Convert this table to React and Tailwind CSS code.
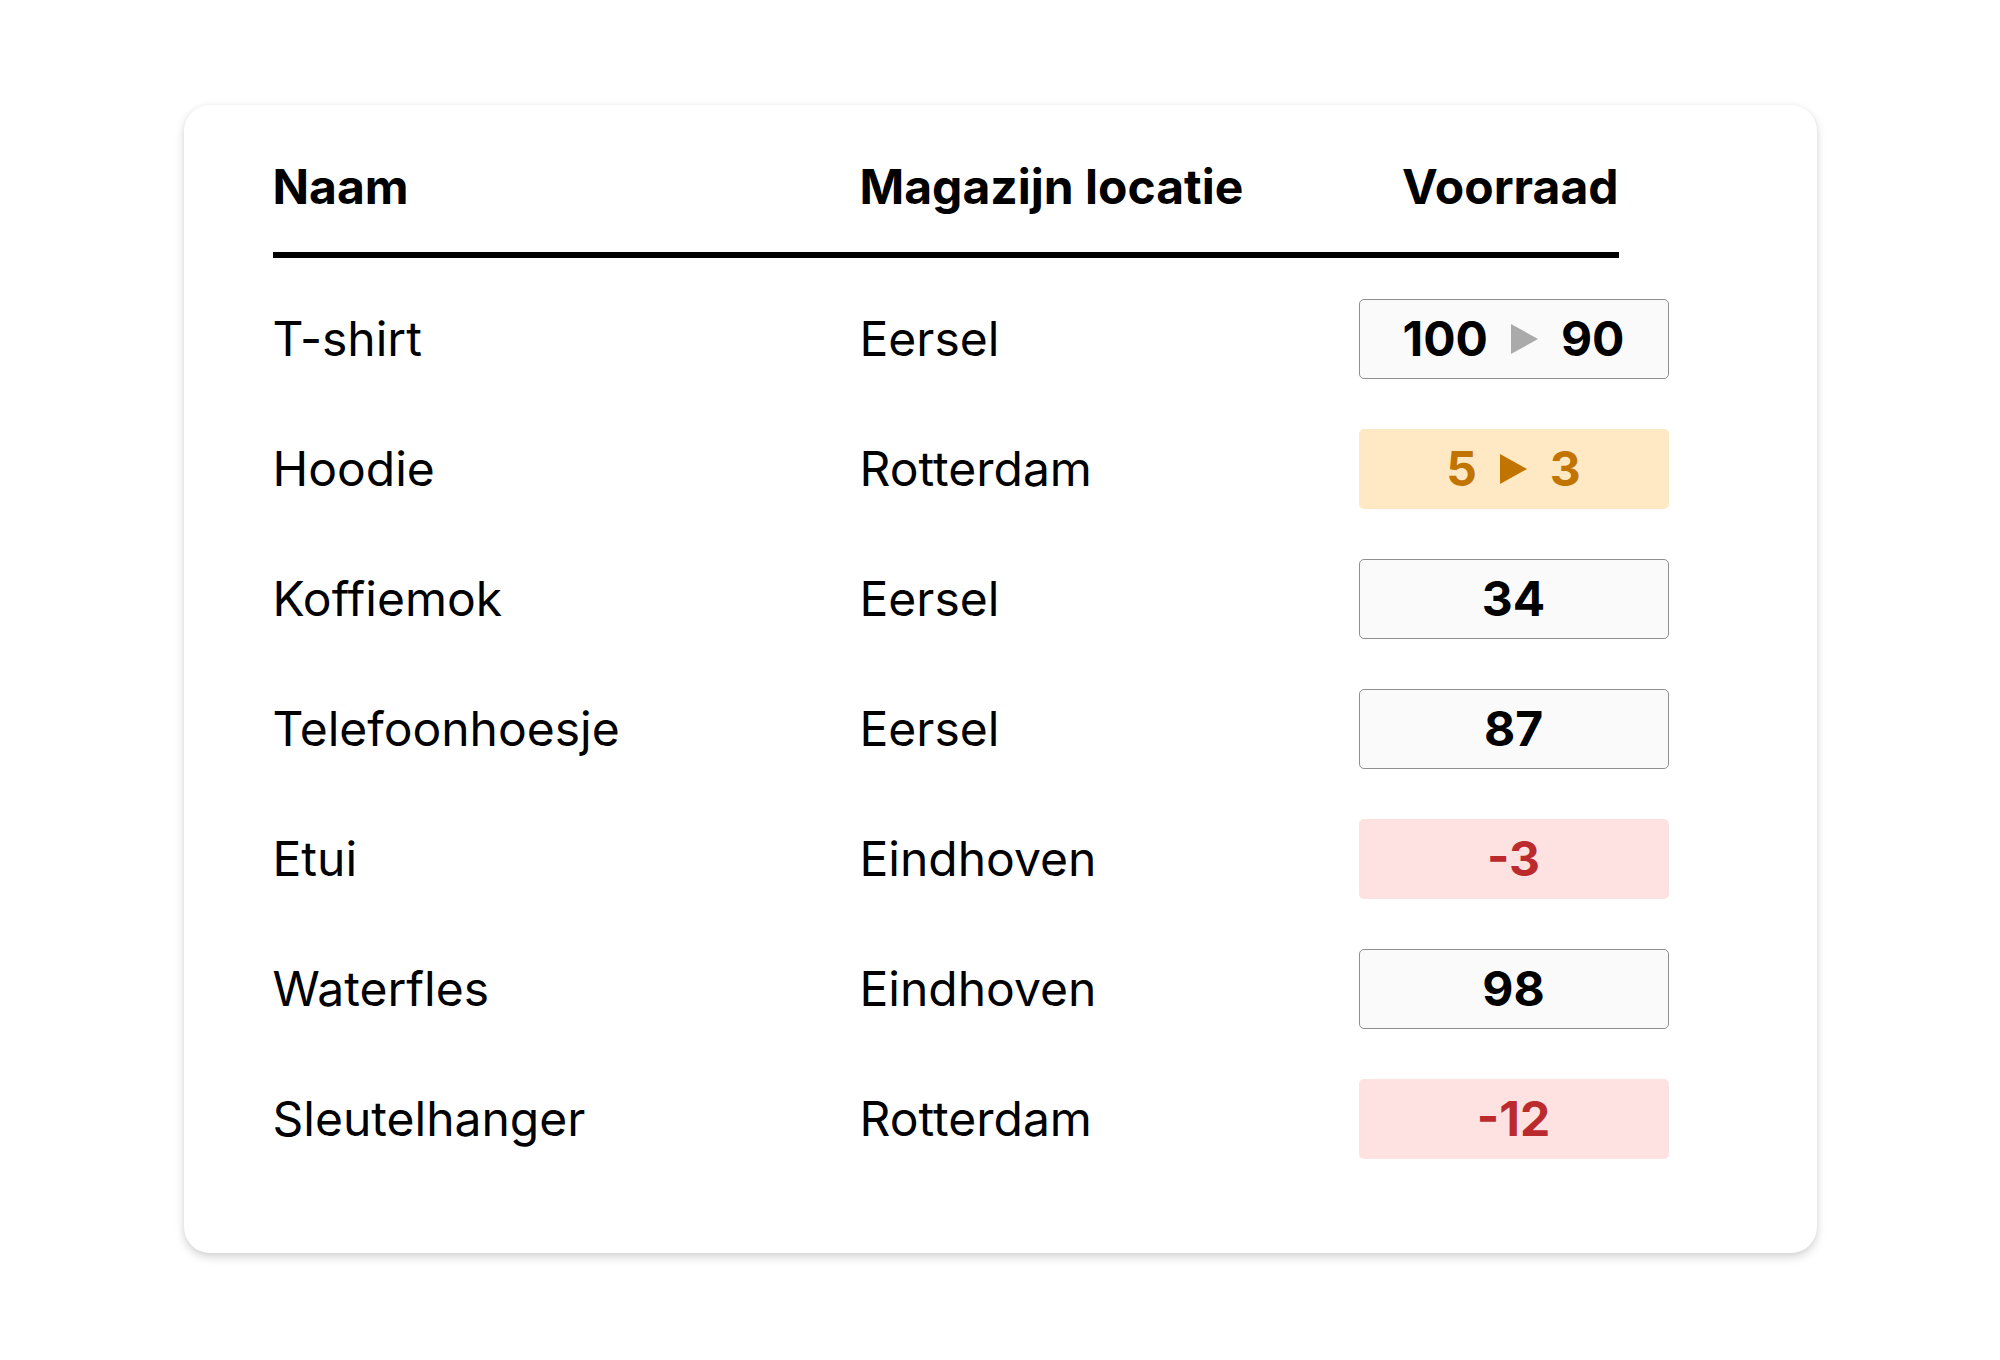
import React from "react";

const rows = [
  { name: "T-shirt", loc: "Eersel", kind: "change", from: "100", to: "90", tone: "neutral" },
  { name: "Hoodie", loc: "Rotterdam", kind: "change", from: "5", to: "3", tone: "warn" },
  { name: "Koffiemok", loc: "Eersel", kind: "value", value: "34", tone: "neutral" },
  { name: "Telefoonhoesje", loc: "Eersel", kind: "value", value: "87", tone: "neutral" },
  { name: "Etui", loc: "Eindhoven", kind: "value", value: "-3", tone: "bad" },
  { name: "Waterfles", loc: "Eindhoven", kind: "value", value: "98", tone: "neutral" },
  { name: "Sleutelhanger", loc: "Rotterdam", kind: "value", value: "-12", tone: "bad" },
];

function Triangle({ className }) {
  return (
    <svg width="27" height="30" viewBox="0 0 27 30" className={className}>
      <polygon points="0,0 27,15 0,30" fill="currentColor" />
    </svg>
  );
}

function StockBox({ row }) {
  const toneClass =
    row.tone === "warn"
      ? "bg-[#ffe8c4] text-[#c27400] border border-transparent"
      : row.tone === "bad"
      ? "bg-[#fee2e2] text-[#bb2a2c] border border-transparent"
      : "bg-[#fafafa] text-black border border-[#8f8f8f]";
  const triClass = row.tone === "warn" ? "text-[#c27400]" : "text-[#aaaaaa]";
  return (
    <div
      className={`w-[310px] h-[80px] rounded-[5px] flex items-center justify-center gap-[23px] text-[48px] font-bold leading-none ${toneClass}`}
    >
      {row.kind === "change" ? (
        <>
          <span>{row.from}</span>
          <Triangle className={triClass} />
          <span>{row.to}</span>
        </>
      ) : (
        <span>{row.value}</span>
      )}
    </div>
  );
}

export default function App() {
  return (
    <div
      className="w-[2000px] h-[1360px] bg-white pt-[105px]"
      style={{ fontFamily: "Inter, 'Noto Sans', sans-serif" }}
    >
      <div className="mx-auto w-[1633px] h-[1148px] bg-white rounded-[26px] shadow-[0_4px_10px_rgba(0,0,0,0.17),0_0_5px_rgba(0,0,0,0.04)] pt-[58px] pl-[89px]">
        <div className="w-[1346px] border-b-[6px] border-black pb-[41px] grid grid-cols-[587px_499px_260px] text-[48px] font-bold leading-none text-black">
          <div>Naam</div>
          <div>Magazijn locatie</div>
          <div className="text-right">Voorraad</div>
        </div>
        <div className="pt-[41px] flex flex-col gap-[50px]">
          {rows.map((r) => (
            <div
              key={r.name}
              className="grid grid-cols-[587px_499px_310px] items-center text-[48px] leading-none text-black"
            >
              <div>{r.name}</div>
              <div>{r.loc}</div>
              <StockBox row={r} />
            </div>
          ))}
        </div>
      </div>
    </div>
  );
}
